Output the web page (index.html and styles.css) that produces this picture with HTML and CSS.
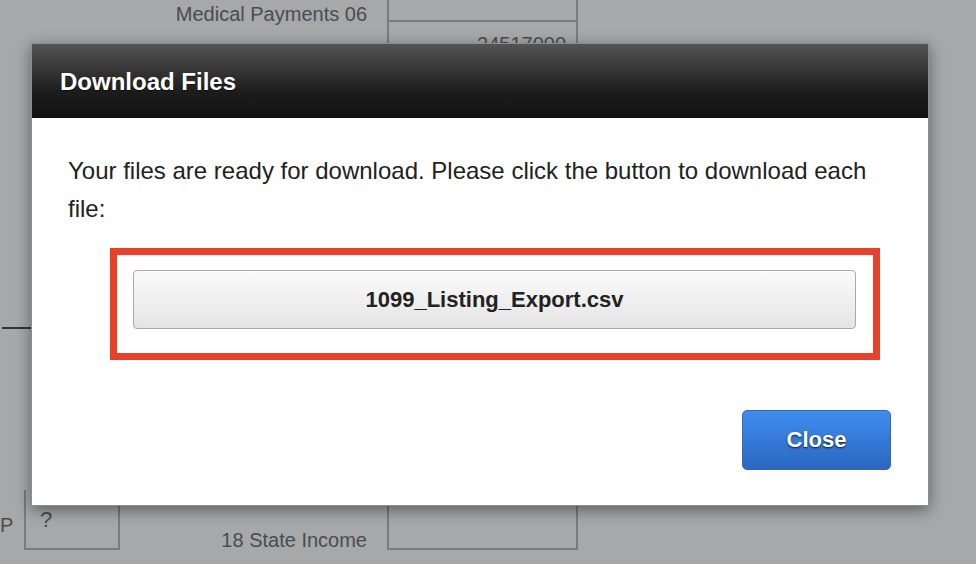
FILE: index.html
```html
<!DOCTYPE html>
<html lang="en">
<head>
<meta charset="UTF-8">
<title>Download Files</title>
<link rel="stylesheet" href="styles.css">
</head>
<body>
<div class="form">
	<div class="row row_top">
		<div class="lbl_p"></div>
		<div class="lbl">Medical Payments 06</div>
		<div class="box box_open_top"></div>
	</div>
	<div class="row row_amount">
		<div class="lbl_p"></div>
		<div class="lbl"></div>
		<div class="box box_amount">24517000</div>
	</div>
	<div class="row row_mid">
		<div class="rule"></div>
	</div>
	<div class="row row_bottom">
		<div class="lbl_p">P</div>
		<div class="qbox">?</div>
		<div class="lbl lbl_state">18 State Income</div>
		<div class="box box_bottom"></div>
	</div>
</div>

<div class="modal">
	<div class="modal_head">Download Files</div>
	<div class="modal_body">
		<p class="msg">Your files are ready for download. Please click the button to download each file:</p>
		<div class="hilite">
			<button class="file_btn" type="button">1099_Listing_Export.csv</button>
		</div>
		<div class="foot">
			<button class="close_btn" type="button">Close</button>
		</div>
	</div>
</div>
</body>
</html>
```

FILE: styles.css
```css
*{margin:0;padding:0;box-sizing:border-box;}
html,body{height:100%;}
body{background:#a7a8aa;font-family:"Liberation Sans",Arial,sans-serif;color:#4b4c4e;overflow:hidden;}

/* form behind the overlay */
.form{display:flex;flex-direction:column;height:564px;}
.row{display:flex;}
.row_top{height:22px;}
.row_amount{height:60px;}
.row_mid{flex:1;align-items:flex-start;padding-top:245px;}
.row_bottom{height:60px;margin-bottom:14px;}
.lbl_p{width:24px;font-size:20px;line-height:46px;padding-top:12px;}
.lbl{width:343px;text-align:right;font-size:20px;line-height:28px;}
.box{width:191px;margin-left:20px;border:2px solid #7a7b7d;}
.box_open_top{border-top:none;}
.box_amount{border-top:none;border-bottom:none;text-align:right;padding:11px 10px 0 0;font-size:20px;}
.qbox{width:96px;border:2px solid #7a7b7d;border-top:none;font-size:22px;padding:17px 0 0 14px;}
.lbl_state{width:247px;padding-top:36px;}
.box_bottom{border-top:none;}
.rule{width:30px;height:2px;background:#343537;margin-left:2px;}

/* modal */
.modal{position:absolute;left:31px;top:43px;width:898px;height:463px;background:#fff;border:1px solid #8d8e90;box-shadow:0 4px 14px rgba(0,0,0,.45);display:flex;flex-direction:column;}
.modal_head{height:74px;padding-left:28px;line-height:76px;font-size:24px;font-weight:bold;color:#fff;background:linear-gradient(#545454,#1c1c1c 65%,#121212);text-shadow:0 1px 1px rgba(0,0,0,.6);}
.modal_body{flex:1;padding:34px 56px 0 36px;display:flex;flex-direction:column;}
.msg{font-size:24px;line-height:38px;color:#222;}
.hilite{width:770px;height:112px;margin:20px 0 0 42px;border:7px solid #e8402a;padding:15px 17px 24px 16px;flex-shrink:0;}
.file_btn{width:100%;height:59px;border:1px solid #a9a9a9;border-radius:4px;background:linear-gradient(#fbfbfb,#e4e4e4);font-family:"Liberation Sans",Arial,sans-serif;font-size:22px;font-weight:bold;color:#222;}
.foot{display:flex;justify-content:flex-end;margin-top:50px;margin-right:-19px;}
.close_btn{width:149px;height:60px;border:1px solid #3a67a6;border-radius:5px;background:linear-gradient(#3f8df0,#2a67bf);font-family:"Liberation Sans",Arial,sans-serif;font-size:22px;font-weight:bold;color:#fff;text-shadow:0 1px 2px rgba(0,0,0,.8);}
```
